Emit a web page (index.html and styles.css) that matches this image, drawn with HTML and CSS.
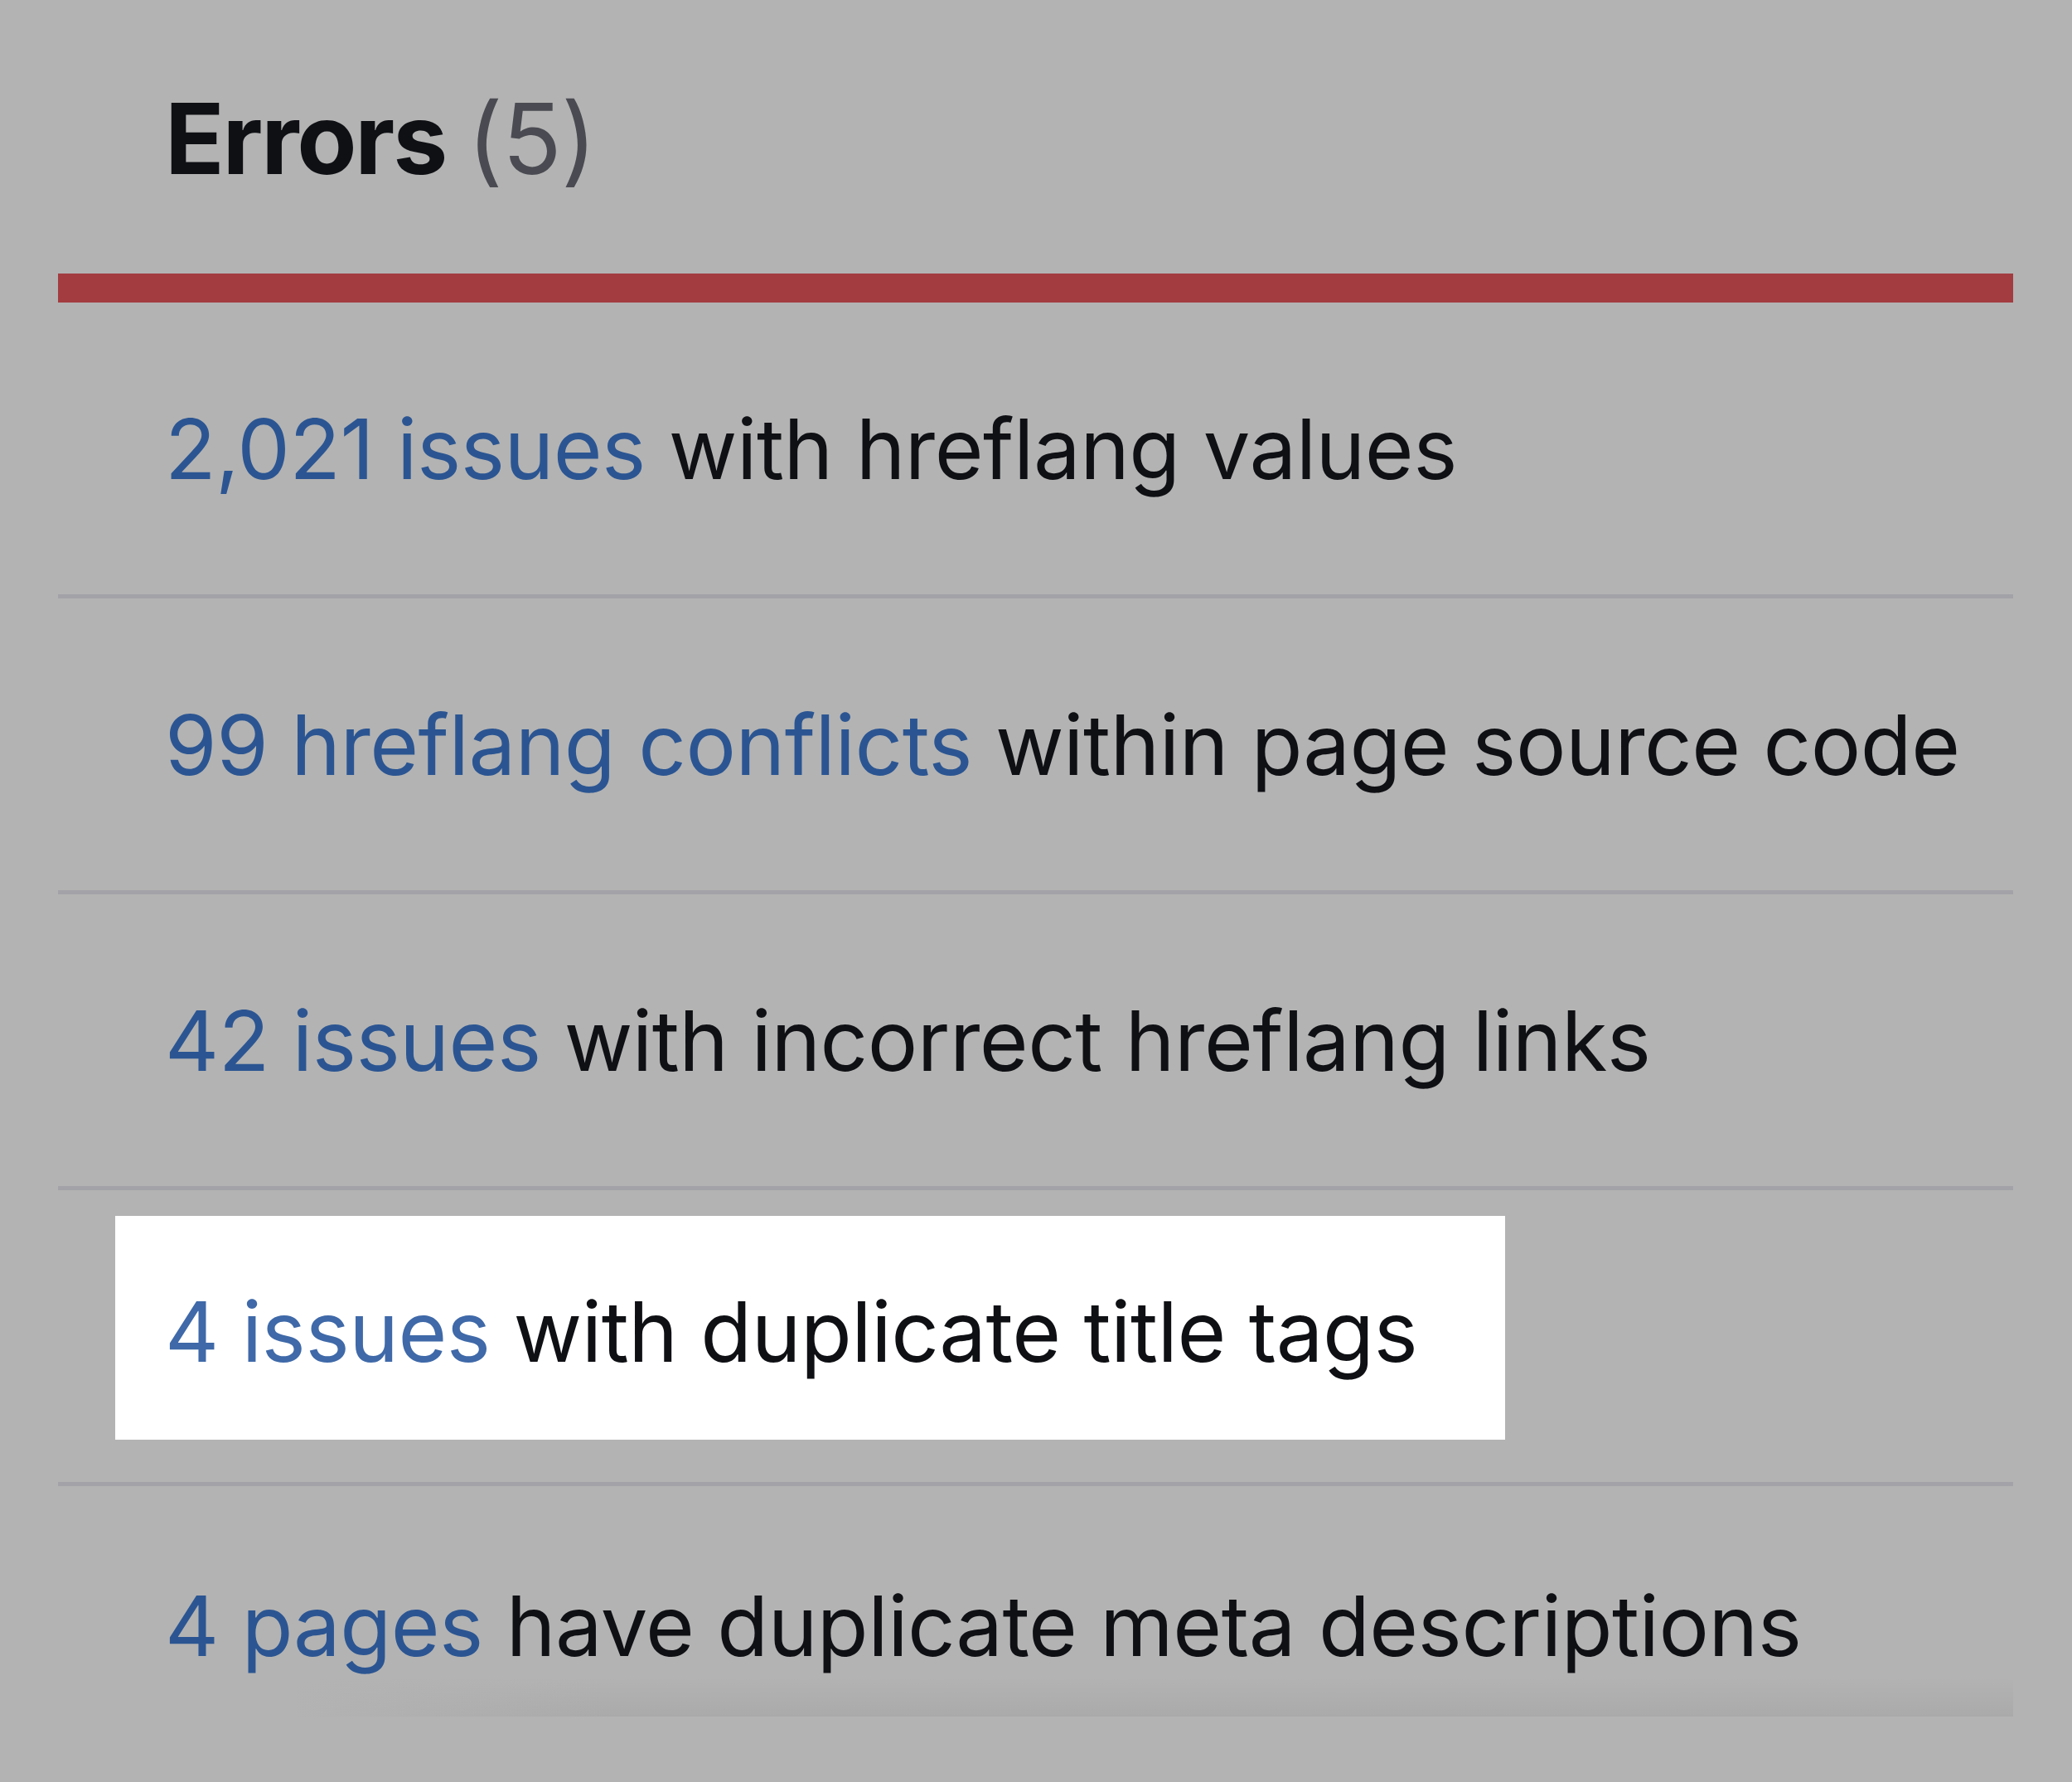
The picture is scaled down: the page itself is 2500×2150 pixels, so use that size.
FILE: index.html
```html
<!DOCTYPE html>
<html lang="en">
<head>
<meta charset="utf-8">
<title>Errors (5)</title>
<link rel="stylesheet" href="styles.css">
</head>
<body>
<main class="panel">
  <h1 class="title">Errors <span class="count">(5)</span></h1>
  <div class="bar"></div>
  <ul class="issues">
    <li class="issue"><span class="text"><a class="link">2,021 issues</a> with hreflang values</span></li>
    <li class="issue"><span class="text"><a class="link">99 hreflang conflicts</a> within page source code</span></li>
    <li class="issue"><span class="text"><a class="link">42 issues</a> with incorrect hreflang links</span></li>
    <li class="issue issue-highlight"><span class="text highlight"><a class="link">4 issues</a> with duplicate title tags</span></li>
    <li class="issue issue-last"><span class="text"><a class="link">4 pages</a> have duplicate meta descriptions</span></li>
  </ul>
  <div class="fade"></div>
</main>
</body>
</html>
```

FILE: styles.css
```css
html, body {
  margin: 0;
  padding: 0;
  background: #b3b3b3;
}

body {
  width: 2500px;
  height: 2150px;
  overflow: hidden;
  font-family: Inter, "Noto Sans", "Liberation Sans", sans-serif;
  color: #0f1014;
}

.panel {
  padding: 0 71px 0 70px;
}

.title {
  margin: 0;
  height: 330px;
  box-sizing: border-box;
  padding: 108px 0 0 129px;
  font-size: 118px;
  line-height: 118px;
  font-weight: 700;
  letter-spacing: -2.2px;
  color: #0f1014;
}

.count {
  font-weight: 400;
  color: #4a4b52;
  letter-spacing: -0.8px;
}

.bar {
  height: 35px;
  background: #a33c40;
}

.issues {
  list-style: none;
  margin: 0;
  padding: 0;
}

.issue {
  height: 352px;
  display: flex;
  align-items: center;
  padding-left: 129px;
  border-bottom: 5px solid #a2a2a8;
  font-size: 101px;
  letter-spacing: -0.5px;
}

.link {
  color: #2b5592;
}

.issue-highlight {
  padding-left: 69px;
}

.highlight {
  background: #ffffff;
  width: 1677px;
  height: 270px;
  box-sizing: border-box;
  padding: 8px 0 0 60px;
  display: flex;
  align-items: center;
  margin-top: -20px;
  white-space: pre;
}

.highlight .link {
  color: #3f69a8;
}

.issue-last {
  height: 230px;
  align-items: flex-start;
  box-sizing: border-box;
  padding-top: 107px;
  border-bottom: none;
}

.fade {
  height: 48px;
  background:
    linear-gradient(to right, #b3b3b3 0%, #b3b3b3 12%, rgba(179,179,179,0) 28%),
    linear-gradient(to bottom, rgba(0,0,0,0) 0%, rgba(0,0,0,0.05) 100%);
}
```
